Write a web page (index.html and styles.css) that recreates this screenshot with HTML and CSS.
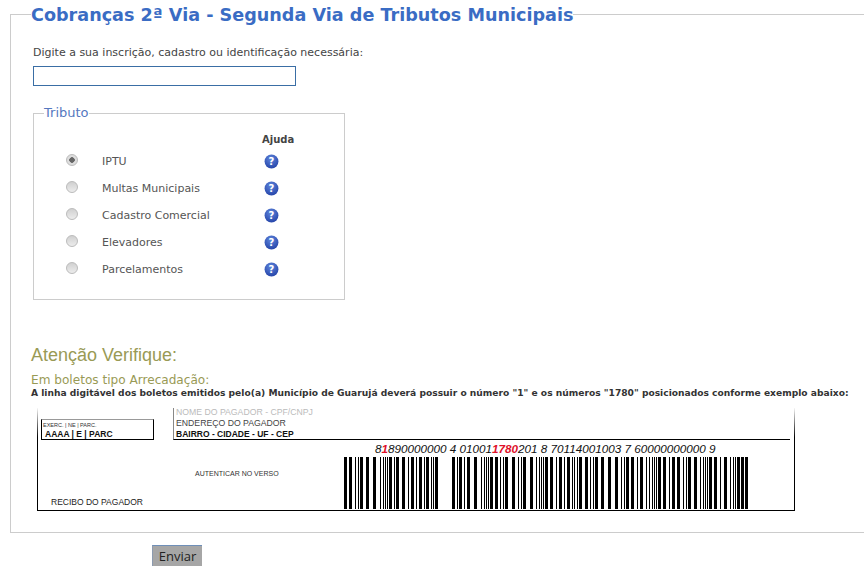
FILE: index.html
```html
<!DOCTYPE html>
<html lang="pt-BR">
<head>
<meta charset="utf-8">
<title>Cobranças 2ª Via</title>
<link rel="stylesheet" href="styles.css">
</head>
<body>
<form class="page">
  <fieldset class="outer">
    <legend class="outer-title">Cobranças 2ª Via - Segunda Via de Tributos Municipais</legend>
    <label class="prompt" for="insc">Digite a sua inscrição, cadastro ou identificação necessária:</label>
    <input class="code-input" id="insc" type="text">
    <fieldset class="tributo">
      <legend class="tributo-title">Tributo</legend>
      <div class="help-head">Ajuda</div>
      <div class="opt"><input class="radio" type="radio" name="t" checked><span class="opt-label">IPTU</span><svg class="help" viewBox="0 0 16 16"><use href="#q"/></svg><span class="help-mark">?</span></div>
      <div class="opt"><input class="radio" type="radio" name="t"><span class="opt-label">Multas Municipais</span><svg class="help" viewBox="0 0 16 16"><use href="#q"/></svg><span class="help-mark">?</span></div>
      <div class="opt"><input class="radio" type="radio" name="t"><span class="opt-label">Cadastro Comercial</span><svg class="help" viewBox="0 0 16 16"><use href="#q"/></svg><span class="help-mark">?</span></div>
      <div class="opt"><input class="radio" type="radio" name="t"><span class="opt-label">Elevadores</span><svg class="help" viewBox="0 0 16 16"><use href="#q"/></svg><span class="help-mark">?</span></div>
      <div class="opt"><input class="radio" type="radio" name="t"><span class="opt-label">Parcelamentos</span><svg class="help" viewBox="0 0 16 16"><use href="#q"/></svg><span class="help-mark">?</span></div>
    </fieldset>
    <h2 class="attention">Atenção Verifique:</h2>
    <h3 class="sub">Em boletos tipo Arrecadação:</h3>
    <p class="note">A linha digitável dos boletos emitidos pelo(a) Município de Guarujá deverá possuir o número "1" e os números "1780" posicionados conforme exemplo abaixo:</p>
    <div class="boleto">
      <div class="bol-top">
        <div class="bol-left">
          <div class="bol-tiny">EXERC. | NE | PARC.</div>
          <div class="bol-strong">AAAA | E | PARC</div>
        </div>
        <div class="bol-right">
          <div class="bol-faded">NOME DO PAGADOR - CPF/CNPJ</div>
          <div class="bol-line">ENDEREÇO DO PAGADOR</div>
          <div class="bol-bold">BAIRRO - CIDADE - UF - CEP</div>
        </div>
      </div>
      <div class="digits">8<b>1</b>890000000 4 01001<b>1780</b>201 8 70114001003 7 60000000000 9</div>
      <div class="bol-bottom">
        <div class="bol-captions">
          <div class="auth">AUTENTICAR NO VERSO</div>
          <div class="recibo">RECIBO DO PAGADOR</div>
        </div>
        <svg class="bars" viewBox="343 0 406 52" width="406" height="52" shape-rendering="crispEdges">
          <path d="M344 0h3v52h-3zM349 0h3v52h-3zM355 0h1v52h-1zM358 0h1v52h-1zM360 0h3v52h-3zM366 0h3v52h-3zM373 0h3v52h-3zM380 0h1v52h-1zM383 0h1v52h-1zM385 0h1v52h-1zM387 0h1v52h-1zM389 0h3v52h-3zM394 0h1v52h-1zM396 0h3v52h-3zM402 0h3v52h-3zM408 0h1v52h-1zM411 0h3v52h-3zM416 0h1v52h-1zM419 0h3v52h-3zM424 0h1v52h-1zM426 0h3v52h-3zM431 0h1v52h-1zM433 0h1v52h-1zM435 0h3v52h-3z"/>
          <path d="M452 0h3v52h-3zM457 0h1v52h-1zM459 0h3v52h-3zM464 0h1v52h-1zM467 0h3v52h-3zM474 0h3v52h-3zM481 0h1v52h-1zM484 0h1v52h-1zM486 0h1v52h-1zM488 0h1v52h-1zM490 0h3v52h-3zM495 0h3v52h-3zM500 0h1v52h-1zM503 0h1v52h-1zM505 0h3v52h-3zM512 0h3v52h-3zM518 0h1v52h-1zM521 0h1v52h-1zM523 0h3v52h-3zM530 0h3v52h-3zM536 0h1v52h-1zM539 0h1v52h-1zM541 0h1v52h-1zM543 0h1v52h-1zM545 0h3v52h-3zM550 0h3v52h-3zM556 0h1v52h-1zM559 0h3v52h-3zM564 0h1v52h-1zM567 0h3v52h-3zM572 0h1v52h-1zM574 0h1v52h-1zM577 0h1v52h-1zM579 0h3v52h-3zM585 0h3v52h-3zM590 0h1v52h-1zM593 0h1v52h-1zM595 0h3v52h-3zM601 0h3v52h-3zM608 0h3v52h-3zM615 0h3v52h-3zM621 0h1v52h-1zM624 0h1v52h-1zM626 0h3v52h-3zM631 0h3v52h-3zM637 0h1v52h-1zM640 0h3v52h-3zM646 0h1v52h-1zM649 0h1v52h-1zM652 0h1v52h-1zM654 0h1v52h-1zM656 0h1v52h-1zM658 0h3v52h-3zM663 0h3v52h-3zM669 0h1v52h-1zM672 0h3v52h-3zM677 0h3v52h-3zM683 0h1v52h-1zM686 0h1v52h-1zM688 0h3v52h-3zM694 0h3v52h-3zM700 0h1v52h-1zM703 0h1v52h-1zM705 0h1v52h-1zM707 0h1v52h-1zM709 0h3v52h-3zM714 0h3v52h-3zM720 0h1v52h-1zM724 0h3v52h-3zM730 0h1v52h-1zM733 0h1v52h-1zM735 0h1v52h-1zM737 0h3v52h-3zM741 0h3v52h-3zM745 0h3v52h-3z"/>
        </svg>
      </div>
    </div>
  </fieldset>
  <button class="send" type="button">Enviar</button>
</form>
<svg class="defs" width="0" height="0" aria-hidden="true">
  <defs>
    <radialGradient id="qg" cx="45%" cy="30%" r="75%">
      <stop offset="0" stop-color="#5f86dc"/>
      <stop offset="1" stop-color="#2241a6"/>
    </radialGradient>
    <symbol id="q" viewBox="0 0 16 16">
      <circle cx="8" cy="8" r="7.4" fill="url(#qg)"/>
    </symbol>
  </defs>
</svg>
</body>
</html>
```

FILE: styles.css
```css
html, body { margin: 0; padding: 0; background: #fff; overflow: hidden; height: 100%; }
body { font-family: "DejaVu Sans", Verdana, sans-serif; color: #444; }
.page { width: 920px; padding-left: 10px; }
.defs { position: absolute; }

.outer {
  margin: 2px 0 0;
  padding: 20px 0 21px 21px;
  border: 0;
  border-top: 1px solid #ccc;
  border-left: 1px solid #ccc;
  border-bottom: 1px solid #ccc;
  min-width: 0;
  height: 488px;
  box-sizing: content-box;
}
.outer-title {
  padding: 2px 0 0;
  margin-left: -1px;
  font-size: 17.6px;
  line-height: 22px;
  font-weight: bold;
  color: #3a6cc4;
}
.prompt { display: block; font-size: 11px; line-height: 14px; color: #444; margin-left: 1px; }
.code-input {
  display: block;
  width: 263px;
  height: 20px;
  margin: 6px 0 0 1px;
  padding: 0;
  box-sizing: border-box;
  border: 1px solid #3a6ea5;
  background: #fff;
}
.tributo {
  margin: 19px 0 0 1px;
  padding: 12px 0 0;
  width: 312px;
  height: 195px;
  box-sizing: border-box;
  border: 1px solid #ccc;
  min-width: 0;
}
.tributo-title {
  padding: 0;
  margin-left: 10px;
  font-size: 13px;
  line-height: 16px;
  color: #5578bf;
}
.help-head {
  padding-left: 228px;
  font-size: 10px;
  font-weight: bold;
  line-height: 13px;
  color: #444;
  margin-bottom: 3px;
}
.opt {
  display: grid;
  grid-template-columns: 68px 162px 14px;
  align-items: center;
  height: 27px;
  font-size: 11px;
  position: relative;
}
.radio {
  appearance: none;
  -webkit-appearance: none;
  width: 12px;
  height: 12px;
  margin: -5px 0 0 32px;
  border-radius: 50%;
  border: 1px solid #bbb;
  box-sizing: border-box;
  background: linear-gradient(#d0d0d0, #ececec);
}
.radio:checked { background: radial-gradient(circle, #666 0 2.5px, #ddd 3px); }
.opt-label { color: #555; margin-top: -2px; }
.help { width: 15px; height: 15px; display: block; margin-top: -2px; }
.help-mark {
  position: absolute;
  left: 230px;
  width: 15px;
  text-align: center;
  top: 6px;
  font-size: 10px;
  line-height: 13px;
  font-weight: bold;
  color: #fff;
}
.attention {
  margin: 44px 0 0 -1px;
  font: normal 18px/22px "Liberation Sans", Arial, sans-serif;
  color: #999a55;
}
.sub {
  margin: 7px 0 0 -1px;
  font-weight: normal;
  font-size: 12.1px;
  line-height: 14px;
  color: #999a55;
}
.note {
  margin: 0 0 0 -1px;
  font-size: 9.15px;
  font-weight: bold;
  line-height: 13px;
  color: #333;
  white-space: nowrap;
}
.boleto {
  width: 758px;
  height: 103px;
  margin: 8px 0 0 5px;
  box-sizing: border-box;
  border-left: 1px solid #000;
  border-bottom: 1px solid #000;
  border-right: 1px solid #000;
  border-image: linear-gradient(#fff 0, #000 30px) 1;
  font-family: "Liberation Sans", Arial, sans-serif;
  color: #111;
}
.bol-top { display: flex; height: 32px; }
.bol-left {
  width: 113px;
  margin-left: 3px;
  height: 21px;
  margin-top: 11px;
  box-sizing: border-box;
  border: 1px solid #000;
  border-top-color: #999;
  padding-left: 1px;
}
.bol-tiny { font-size: 5.5px; line-height: 8px; color: #333; margin-top: 1px; }
.bol-strong { font-size: 8.5px; font-weight: bold; line-height: 10px; padding-left: 2px; }
.bol-right {
  margin-left: 19px;
  width: 617px;
  box-sizing: border-box;
  border-left: 1px solid #888;
  border-bottom: 1px solid #000;
  padding-left: 2px;
  color: #333;
}
.bol-faded { font-size: 8.7px; line-height: 10px; color: #bbb; margin-top: -1px; }
.bol-line { font-size: 8.7px; line-height: 11px; color: #444; margin-top: 1px; }
.bol-bold { font-size: 8.5px; line-height: 11px; font-weight: bold; color: #111; }
.digits {
  font-size: 11.7px;
  line-height: 14px;
  font-style: italic;
  margin: 2px 0 0 337px;
  white-space: nowrap;
}
.digits b { color: #e0102a; }
.bol-bottom { display: flex; margin-top: 1px; }
.bol-captions { width: 305px; }
.auth { font-size: 7px; line-height: 9px; padding-left: 157px; margin-top: 12px; color: #333; }
.recibo { font-size: 8.5px; line-height: 10px; padding-left: 13px; margin-top: 19px; color: #222; }
.bars { display: block; fill: #000; }
.send {
  display: block;
  margin: 12px 0 0 142px;
  width: 50px;
  height: 21px;
  padding: 0;
  border: 0;
  border-top: 1px solid #6f8fb8;
  border-left: 1px solid #8c9bb0;
  background: #a6a6a6;
  color: #222;
  font: 13px/19px "Open Sans", sans-serif;
}
```
